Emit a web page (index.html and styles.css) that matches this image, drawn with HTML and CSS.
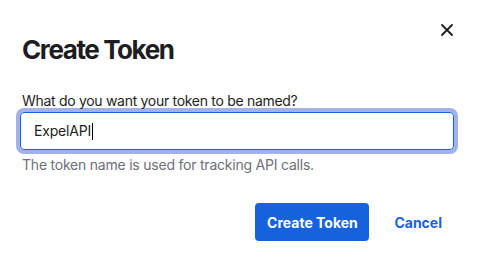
FILE: index.html
```html
<!DOCTYPE html>
<html lang="en">

<head>
    <meta charset="UTF-8">
    <meta name="viewport" content="width=device-width, initial-scale=1.0">
    <title>Create Token</title>
    <link rel="stylesheet" href="styles.css">
</head>

<body>
    <div class="modal">
        <div class="modal-header">
            <h1 class="modal-title">Create Token</h1>
            <button class="close-btn" aria-label="Close">
                <svg width="12" height="12" viewBox="0 0 12 12">
                    <path d="M1 1 L11 11 M11 1 L1 11" stroke="#1d1d21" stroke-width="1.8" stroke-linecap="round" />
                </svg>
            </button>
        </div>

        <div class="field">
            <label class="field-label" for="tokenName">What do you want your token to be named?</label>
            <div class="field-input">ExpelAPI<span class="caret"></span></div>
            <p class="field-hint">The token name is used for tracking API calls.</p>
        </div>

        <div class="modal-actions">
            <button class="btn-primary">Create Token</button>
            <button class="btn-link">Cancel</button>
        </div>
    </div>
</body>

</html>
```

FILE: styles.css
```css
body {
    font-family: 'Inter', 'Liberation Sans', sans-serif;
    margin: 0;
    padding: 0;
    background-color: #fff;
    color: #1d1d21;
}

/* Modal */
.modal {
    padding: 0 20px 0 22px;
}

.modal-header {
    display: flex;
    justify-content: space-between;
    align-items: flex-start;
    padding-top: 34px;
}

.modal-title {
    margin: 0;
    font-size: 26px;
    line-height: 32px;
    font-weight: 700;
    letter-spacing: -1.4px;
}

.close-btn {
    background: none;
    border: none;
    padding: 0;
    margin: -10px 4px 0 0;
    width: 12px;
    height: 12px;
    cursor: pointer;
}

.close-btn svg {
    display: block;
}

/* Field */
.field {
    margin-top: 25px;
}

.field-label {
    display: block;
    font-size: 14px;
    line-height: 20px;
    letter-spacing: -0.3px;
    margin-bottom: 1px;
}

.field-input {
    box-sizing: border-box;
    margin-left: -2px;
    width: 434px;
    height: 38px;
    border: 1px solid #1662dd;
    border-radius: 4px;
    box-shadow: 0 0 0 4px #a3b1e9;
    padding: 0 13px;
    font-size: 14px;
    line-height: 36px;
    letter-spacing: -0.2px;
    display: flex;
    align-items: center;
}

.caret {
    display: inline-block;
    width: 1px;
    height: 17px;
    background: #000;
    margin-left: 1px;
}

.field-hint {
    margin: 5px 0 0;
    font-size: 14px;
    line-height: 20px;
    letter-spacing: -0.22px;
    color: #6e6e78;
}

/* Actions */
.modal-actions {
    display: flex;
    justify-content: flex-end;
    align-items: center;
    margin-top: 28px;
    padding-right: 15px;
}

.btn-primary {
    font-family: inherit;
    width: 114px;
    height: 38px;
    background-color: #1662dd;
    color: #fff;
    border: none;
    border-radius: 4px;
    font-size: 14px;
    font-weight: 700;
    cursor: pointer;
}

.btn-link {
    font-family: inherit;
    background: none;
    border: none;
    padding: 0;
    margin-left: 25px;
    color: #1662dd;
    font-size: 14px;
    font-weight: 700;
    cursor: pointer;
}
```
